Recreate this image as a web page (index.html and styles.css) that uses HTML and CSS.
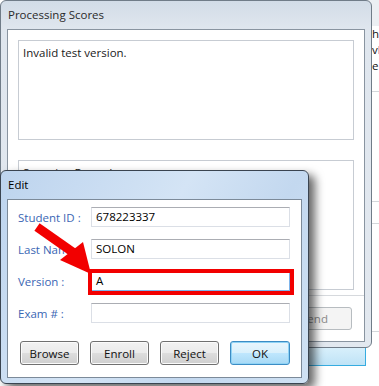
FILE: index.html
```html
<!DOCTYPE html>
<html lang="en">
<head>
    <meta charset="UTF-8">
    <title>Edit</title>
    <link rel="stylesheet" href="styles.css">
</head>
<body>
    <div class="desktop">
        <div class="back-win">
            <div class="back-title"></div>
            <div class="back-text">
                <div>h<span class="orange">a</span></div>
                <div>v<span class="purple">l</span></div>
                <div>e</div>
            </div>
            <div class="back-row r1"></div>
            <div class="back-row r2"></div>
            <div class="back-row r3"></div>
            <div class="back-row r4"></div>
        </div>

        <div class="task-btn"></div>

        <div class="win proc">
            <div class="title">Processing Scores</div>
            <div class="client">
                <div class="box msg">Invalid test version.</div>
                <div class="box scan">Scanning Records</div>
                <div class="btn-bar">
                    <button class="btn" disabled>Send</button>
                </div>
            </div>
        </div>

        <div class="win edit">
            <div class="title">Edit</div>
            <div class="client">
                <div class="form">
                    <label>Student ID :</label>
                    <div class="field">678223337</div>
                    <label>Last Name</label>
                    <div class="field">SOLON</div>
                    <label>Version :</label>
                    <div class="field focused">A</div>
                    <label>Exam # :</label>
                    <div class="field"></div>
                </div>
                <div class="buttons">
                    <button class="btn">Browse</button>
                    <button class="btn">Enroll</button>
                    <button class="btn">Reject</button>
                    <button class="btn default">OK</button>
                </div>
            </div>
        </div>

        <div class="red-box"></div>
        <svg class="arrow" width="379" height="386" viewBox="0 0 379 386">
            <line x1="37" y1="227" x2="74" y2="253" stroke="#f20000" stroke-width="9"/>
            <polygon points="60,260 83,242 91,274" fill="#f20000"/>
        </svg>
    </div>
</body>
</html>
```

FILE: styles.css
```css
* {
    margin: 0;
    padding: 0;
    box-sizing: border-box;
    font-family: "Open Sans", "Noto Sans", sans-serif;
}

body {
    background-color: #ffffff;
}

.desktop {
    position: relative;
    width: 379px;
    height: 386px;
    overflow: hidden;
    background-color: #ffffff;
}

/* window peeking out on the right */
.back-win {
    position: absolute;
    left: 330px;
    top: 0;
    width: 60px;
    height: 386px;
    background-color: #ffffff;
}

.back-title {
    height: 26px;
    background-color: #eceff3;
}

.back-text {
    padding-left: 42px;
    font-size: 11.5px;
    line-height: 16px;
    color: #111;
}

.orange { color: #d07a00; }
.purple { color: #7a1a8a; }

.back-row {
    border-bottom: 1px solid #d4d7db;
}

.r1 { height: 18px; }
.r2 { height: 110px; }
.r3 { height: 22px; }
.r4 { height: 108px; }

.task-btn {
    position: absolute;
    left: 250px;
    top: 347px;
    width: 116px;
    height: 19px;
    background: linear-gradient(#d9f0fc, #bfe3f6);
    border: 1px solid #36ace0;
    border-top: none;
}

/* windows */
.win {
    position: absolute;
    left: 0;
    display: flex;
    flex-direction: column;
    border-radius: 6px;
}

.title {
    height: 28px;
    line-height: 28px;
    padding-left: 7px;
    font-size: 11.5px;
    color: #1a1a1a;
}

.client {
    background-color: #ffffff;
    margin: 0 6px 5px 6px;
}

.proc {
    top: 0;
    width: 372px;
    height: 348px;
    border: 1px solid #707c88;
    background: linear-gradient(180deg, #d2dce7 0%, #dfe6ee 8%, #e2e8ef 100%);
}

.proc .title {
    color: #2a2a2a;
}

.proc .client {
    height: 313px;
    border: 1px solid #8994a0;
    padding: 10px 10px 0 10px;
    display: flex;
    flex-direction: column;
}

.box {
    border: 1px solid #c7ccd3;
    font-size: 11.5px;
    color: #1a1a1a;
    padding: 4px 4px;
}

.msg {
    height: 100px;
}

.scan {
    height: 130px;
    margin-top: 20px;
}

.btn-bar {
    margin: 5px -10px 0 -10px;
    border-top: 1px solid #d6d9dd;
    padding: 11px 12px 0 12px;
    display: flex;
    justify-content: flex-end;
}

.btn {
    height: 24px;
    width: 59px;
    font-size: 11.5px;
    color: #111;
    border: 1px solid #707070;
    border-radius: 3px;
    background: linear-gradient(#f2f2f2 0%, #ebebeb 48%, #dddddd 52%, #cfcfcf 100%);
    box-shadow: inset 0 0 0 1px #fbfbfb;
}

.btn-bar .btn {
    width: 75px;
    height: 23px;
    color: #8a8a8a;
    border-color: #b7bcc0;
    background: #f4f4f4;
    box-shadow: none;
}

.edit {
    top: 170px;
    width: 309px;
    height: 214px;
    border: 1px solid #3a4450;
    background: linear-gradient(120deg, #bdd4ee 0%, #d4e4f5 45%, #c3d8ef 70%, #cfe1f3 100%);
    box-shadow: 6px 5px 10px rgba(0, 0, 0, 0.6);
}

.edit .title {
    color: #000;
}

.edit .client {
    height: 179px;
    border: 1px solid #7c8a99;
    padding: 7px 10px 0 10px;
}

.form {
    display: grid;
    grid-template-columns: 73px 199px;
    grid-auto-rows: 20px;
    row-gap: 12px;
    align-items: center;
}

label {
    font-size: 11.5px;
    color: #3a66b4;
}

.field {
    height: 20px;
    border: 1px solid #dbdfe6;
    border-top-color: #abadb3;
    font-size: 11.5px;
    line-height: 18px;
    padding-left: 4px;
    color: #000;
}

.field.focused {
    border-color: #7eb4ea;
}

.buttons {
    display: flex;
    gap: 11px;
    margin-top: 18px;
    padding-left: 2px;
}

.btn.default {
    width: 60px;
    border-color: #3c8cc4;
    background: linear-gradient(#eaf6fd 0%, #d9f0fc 48%, #bee6fd 52%, #a7d9f5 100%);
    box-shadow: inset 0 0 0 1px #8fd3f5;
}

/* annotation over the dialog */
.red-box {
    position: absolute;
    left: 88px;
    top: 269px;
    width: 206px;
    height: 26px;
    border: 4px solid #f20000;
}

.arrow {
    position: absolute;
    left: 0;
    top: 0;
    pointer-events: none;
}
```
